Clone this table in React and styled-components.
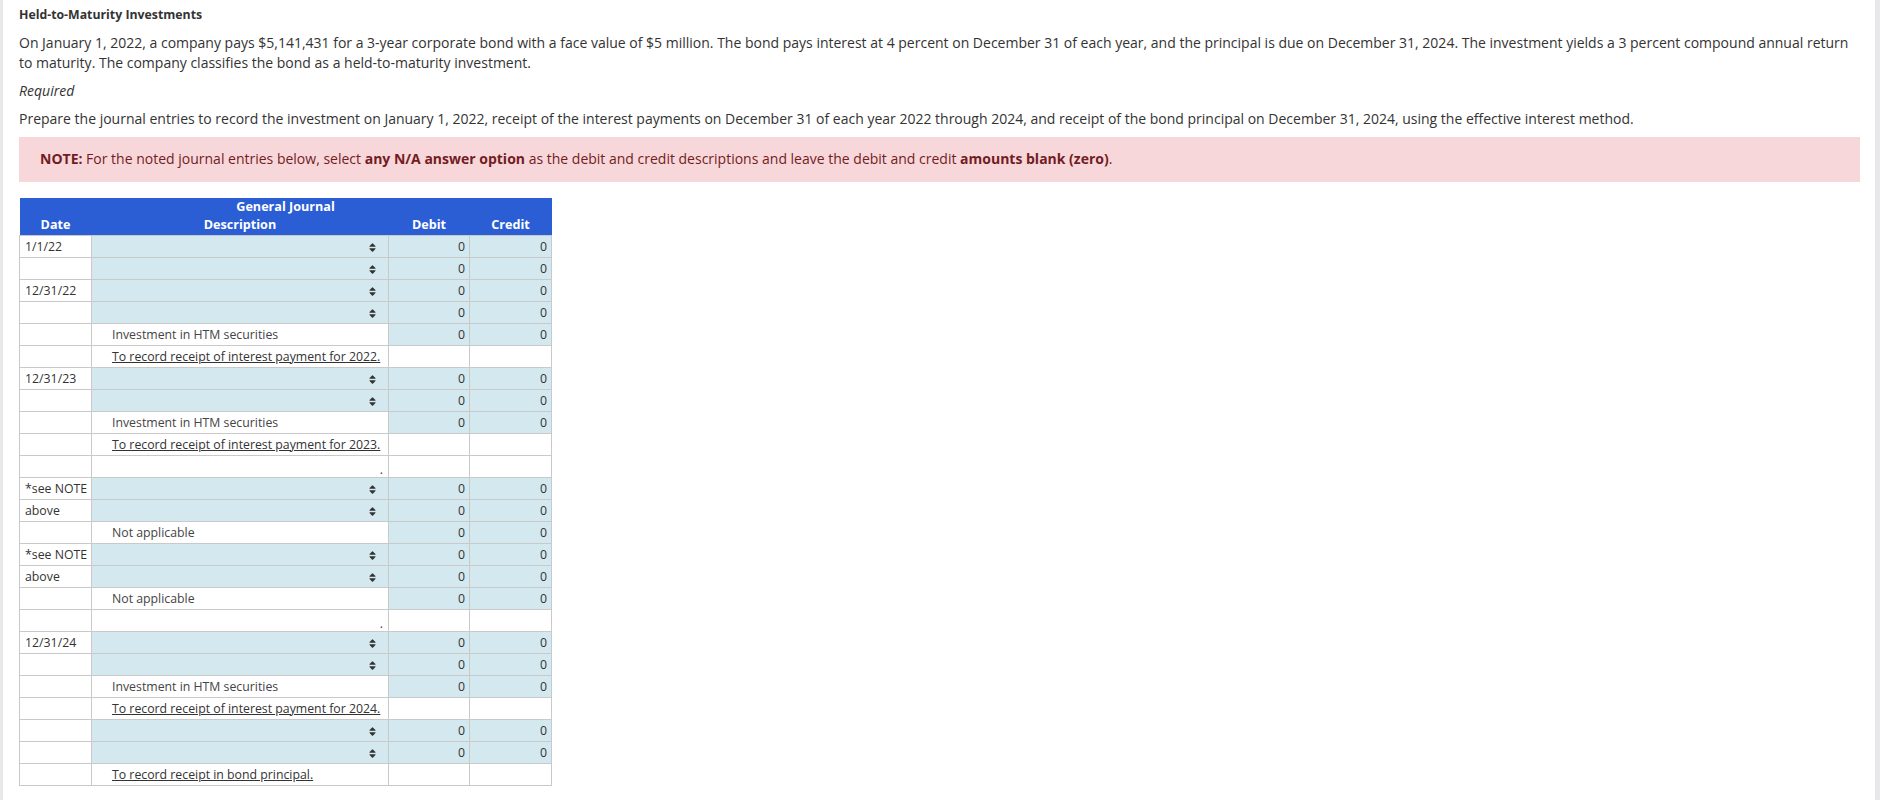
import { FaSort } from "react-icons/fa";
import styled, { createGlobalStyle } from "styled-components";

const GlobalStyle = createGlobalStyle`
  html, body {
    margin: 0;
    padding: 0;
    background: #e8e8eb;
  }
  body {
    font-family: "Open Sans", "Liberation Sans", sans-serif;
    color: #333;
  }
`;

const rows = [
  { date: "1/1/22", kind: "select" },
  { kind: "select" },
  { date: "12/31/22", kind: "select" },
  { kind: "select" },
  { kind: "account", text: "Investment in HTM securities" },
  { kind: "memo", text: "To record receipt of interest payment for 2022." },
  { date: "12/31/23", kind: "select" },
  { kind: "select" },
  { kind: "account", text: "Investment in HTM securities" },
  { kind: "memo", text: "To record receipt of interest payment for 2023." },
  { kind: "dot" },
  { date: "*see NOTE", kind: "select" },
  { date: "above", kind: "select" },
  { kind: "account", text: "Not applicable" },
  { date: "*see NOTE", kind: "select" },
  { date: "above", kind: "select" },
  { kind: "account", text: "Not applicable" },
  { kind: "dot" },
  { date: "12/31/24", kind: "select" },
  { kind: "select" },
  { kind: "account", text: "Investment in HTM securities" },
  { kind: "memo", text: "To record receipt of interest payment for 2024." },
  { kind: "select" },
  { kind: "select" },
  { kind: "memo", text: "To record receipt in bond principal." },
];

const App = () => {
  return (
    <>
      <GlobalStyle />
      <Page>
        <Title>Held-to-Maturity Investments</Title>
        <Para>
          On January 1, 2022, a company pays $5,141,431 for a 3-year corporate bond with a face value of $5
          million. The bond pays interest at 4 percent on December 31 of each year, and the principal is due on
          December 31, 2024. The investment yields a 3 percent compound annual return to maturity. The company
          classifies the bond as a held-to-maturity investment.
        </Para>
        <Para as="em">Required</Para>
        <Para>
          Prepare the journal entries to record the investment on January 1, 2022, receipt of the interest
          payments on December 31 of each year 2022 through 2024, and receipt of the bond principal on December
          31, 2024, using the effective interest method.
        </Para>
        <Note>
          <b>NOTE:</b> For the noted journal entries below, select <b>any N/A answer option</b> as the debit and
          credit descriptions and leave the debit and credit <b>amounts blank (zero)</b>.
        </Note>

        <Journal>
          <colgroup>
            <col style={{ width: 72 }} />
            <col style={{ width: 297 }} />
            <col style={{ width: 81 }} />
            <col style={{ width: 82 }} />
          </colgroup>
          <thead>
            <tr>
              <HeadCell colSpan={4} $top>General Journal</HeadCell>
            </tr>
            <tr>
              <HeadCell>Date</HeadCell>
              <HeadCell>Description</HeadCell>
              <HeadCell>Debit</HeadCell>
              <HeadCell>Credit</HeadCell>
            </tr>
          </thead>
          <tbody>
            {rows.map((row, index) => (
              <JournalRow key={index} row={row} />
            ))}
          </tbody>
        </Journal>
      </Page>
    </>
  );
};

const JournalRow = ({ row }) => {
  const hasAmounts = row.kind === "select" || row.kind === "account";
  return (
    <Row>
      <DateCell>{row.date}</DateCell>
      {row.kind === "select" && (
        <DescCell $input>
          <SortIcon>
            <FaSort />
          </SortIcon>
        </DescCell>
      )}
      {row.kind === "account" && <DescCell>{row.text}</DescCell>}
      {row.kind === "memo" && (
        <DescCell>
          <Memo>{row.text}</Memo>
        </DescCell>
      )}
      {row.kind === "dot" && <DescCell $dot>.</DescCell>}
      <AmountCell $input={hasAmounts}>{hasAmounts ? "0" : ""}</AmountCell>
      <AmountCell $input={hasAmounts}>{hasAmounts ? "0" : ""}</AmountCell>
    </Row>
  );
};

export default App;

const Page = styled.div`
  margin: 0 5px 0 3px;
  min-height: 800px;
  background: #fff;
  padding: 5px 15px 0 16px;
  box-sizing: border-box;
`;

const Title = styled.div`
  font-size: 12.3px;
  font-weight: 700;
  line-height: 20px;
  margin-bottom: 8px;
`;

const Para = styled.p`
  display: block;
  margin: 0 0 8px;
  font-size: 14px;
  line-height: 20px;
`;

const Note = styled.div`
  background: #f8d7da;
  color: #721c24;
  font-size: 14px;
  line-height: 20px;
  padding: 12px 21px 13px;
  margin-bottom: 16px;
`;

const Journal = styled.table`
  border-collapse: collapse;
  table-layout: fixed;
  width: 532px;
  font-size: 12.3px;
`;

const HeadCell = styled.th`
  background: #2b5ed4;
  color: #fff;
  font-weight: 700;
  font-size: 12.6px;
  padding: 0;
  height: ${(p) => (p.$top ? "18px" : "19px")};
  line-height: ${(p) => (p.$top ? "18px" : "17px")};
  vertical-align: ${(p) => (p.$top ? "bottom" : "top")};
  text-align: center;
`;

const Row = styled.tr`
  height: 22px;
`;

const Cell = styled.td`
  border: 1px solid #c9c9c9;
  padding: 0;
  height: 21px;
  line-height: 20px;
  color: #333;
`;

const DateCell = styled(Cell)`
  background: #fff;
  padding-left: 5px;
  white-space: nowrap;
  overflow: hidden;
`;

const DescCell = styled(Cell)`
  background: ${(p) => (p.$input ? "#d4e8ef" : "#fff")};
  color: #444;
  padding: ${(p) => (p.$dot ? "0 5px 0 0" : "0 0 0 20px")};
  text-align: ${(p) => (p.$input || p.$dot ? "right" : "left")};
  vertical-align: ${(p) => (p.$dot ? "bottom" : "middle")};
  line-height: ${(p) => (p.$dot ? "14px" : "20px")};
`;

const SortIcon = styled.span`
  display: inline-flex;
  align-items: center;
  margin-right: 12px;
  vertical-align: middle;
  color: #333;

  svg {
    width: 7px;
    height: 11px;
  }
`;

const Memo = styled.span`
  color: #333;
  text-decoration: underline;
`;

const AmountCell = styled(Cell)`
  background: ${(p) => (p.$input ? "#d4e8ef" : "#fff")};
  text-align: right;
  padding-right: 4px;
`;
